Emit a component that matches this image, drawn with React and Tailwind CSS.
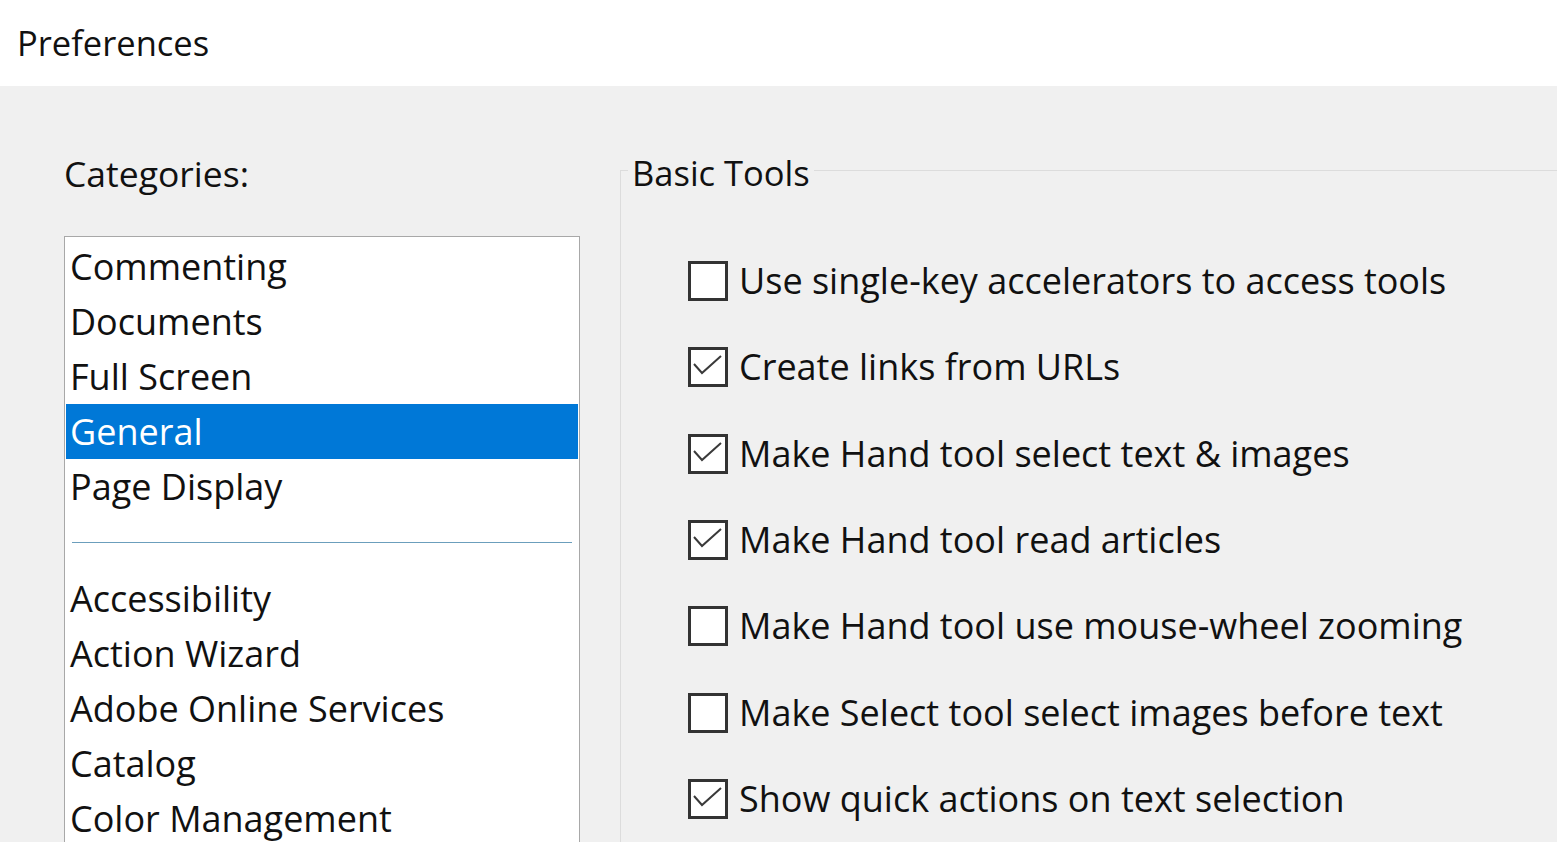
import React from 'react';

const groupOne = ['Commenting', 'Documents', 'Full Screen', 'General', 'Page Display'];
const groupTwo = ['Accessibility', 'Action Wizard', 'Adobe Online Services', 'Catalog', 'Color Management'];

const options = [
  { label: 'Use single-key accelerators to access tools', checked: false },
  { label: 'Create links from URLs', checked: true },
  { label: 'Make Hand tool select text & images', checked: true },
  { label: 'Make Hand tool read articles', checked: true },
  { label: 'Make Hand tool use mouse-wheel zooming', checked: false },
  { label: 'Make Select tool select images before text', checked: false },
  { label: 'Show quick actions on text selection', checked: true },
];

function Checkbox({ checked }) {
  return (
    <div className="w-[40px] h-[40px] border-[3px] border-[#333333] bg-white shrink-0">
      {checked && (
        <svg viewBox="0 0 34 34" className="w-full h-full">
          <path d="M3 14 L11 23 L30 6" fill="none" stroke="#3a3a3a" strokeWidth="2" />
        </svg>
      )}
    </div>
  );
}

function Row({ name, selected }) {
  return (
    <div
      className={`h-[55px] leading-[55px] pl-[4px] whitespace-nowrap ${
        selected ? 'bg-[#0078d7] text-white' : 'text-[#111111]'
      }`}
    >
      {name}
    </div>
  );
}

export default function App() {
  return (
    <div
      className="w-[1557px] h-[842px] overflow-hidden bg-[#f0f0f0] text-[36px] text-[#111111]"
      style={{ fontFamily: '"Open Sans", "Noto Sans", sans-serif' }}
    >
      <div className="h-[86px] bg-white pl-[17px] leading-[86px] text-[34.5px]">Preferences</div>

      <div className="flex">
        {/* categories */}
        <div className="pl-[64px] pt-[62px] w-[620px] shrink-0">
          <div className="h-[50px] leading-[50px] mb-[38px] text-[35.5px]">Categories:</div>
          <div className="w-[516px] h-[700px] bg-white border border-[#a8a8a8] px-[1px] pt-[2px]">
            {groupOne.map((c) => (
              <Row key={c} name={c} selected={c === 'General'} />
            ))}
            <div className="h-[57px] flex items-center px-[6px]">
              <div className="w-full h-px bg-[#6b9ebc]" />
            </div>
            {groupTwo.map((c) => (
              <Row key={c} name={c} />
            ))}
          </div>
        </div>

        {/* basic tools */}
        <div className="pt-[62px] flex-1">
          <fieldset className="border-l border-t border-[#dcdcdc] w-[1200px] h-[800px]">
            <legend className="ml-[7px] px-[4px] h-[44px] leading-[50px] text-[34.5px]">Basic Tools</legend>
            <div className="pt-[46px] pl-[67px]">
              {options.map((o) => (
                <div key={o.label} className="h-[86.33px] flex items-center gap-[11px]">
                  <Checkbox checked={o.checked} />
                  <span className="whitespace-nowrap">{o.label}</span>
                </div>
              ))}
            </div>
          </fieldset>
        </div>
      </div>
    </div>
  );
}
